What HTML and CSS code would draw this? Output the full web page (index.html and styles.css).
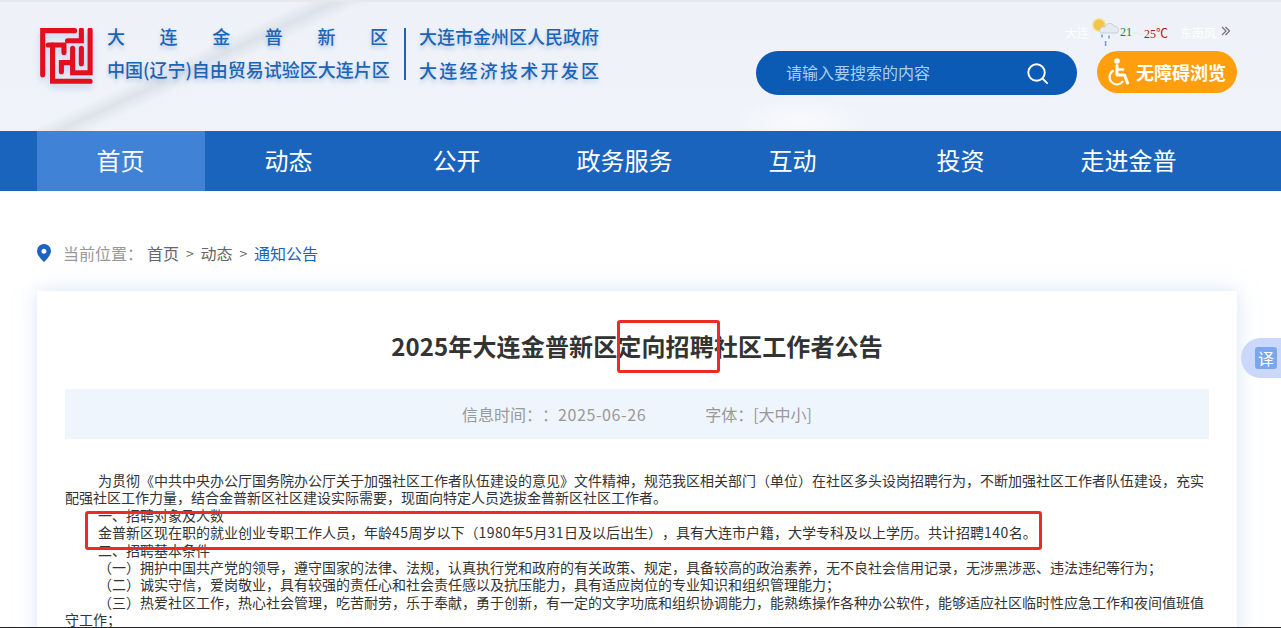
FILE: index.html
```html
<!DOCTYPE html>
<html lang="zh-CN">
<head>
<meta charset="utf-8">
<title>2025年大连金普新区定向招聘社区工作者公告</title>
<link rel="stylesheet" href="styles.css">
</head>
<body>
<div class="page">
  <header class="header">
    <div class="brand">
      <svg class="logo" viewBox="0 0 52 55" aria-hidden="true">
        <g fill="none" stroke="#e2101f" stroke-width="5" stroke-linejoin="miter" stroke-linecap="round">
          <path d="M2.600 46V2.600H34"/>
          <path d="M40.600 2V12.500H27"/>
          <path d="M49.200 2V44H32V20"/>
          <path d="M8 16.700H23.500V24"/>
          <path d="M12.300 16.700V52.300H49.200"/>
          <path d="M32 34H21V43"/>
          <path d="M40.600 20V35"/>
        </g>
      </svg>
      <div class="names">
        <div class="name-top"><span>大</span><span>连</span><span>金</span><span>普</span><span>新</span><span>区</span></div>
        <div class="name-sub">中国(辽宁)自由贸易试验区大连片区</div>
      </div>
      <div class="divider"></div>
      <div class="names">
        <div class="name-gov">大连市金州区人民政府</div>
        <div class="name-gov wide">大连经济技术开发区</div>
      </div>
    </div>
    <div class="tools">
      <div class="weather">
        <span class="w-city">大连</span>
        <svg class="w-icon" viewBox="0 0 28 30" aria-hidden="true">
          <circle cx="7" cy="8" r="6.500" fill="#f2c64a" stroke="#f8e6ae" stroke-width="1.600"/>
          <path d="M9 16c-3-3 0-7 4-6 1-4 7-5 9-1 4 0 6 4 3 7z" fill="#e6ebf2" stroke="#b4c0cf" stroke-width=".7"/>
          <path d="M10 17.500v3M17 18.500v3M13.600 24v5" stroke="#6fa3c8" stroke-width="1.600"/>
        </svg>
        <span class="w-low">21</span><span class="w-sep">～</span><span class="w-high">25℃</span>
        <span class="w-wind">东南风</span>
        <svg class="w-more" viewBox="0 0 9 10" aria-hidden="true">
          <path d="M1 1l4 4-4 4M4.500 1l4 4-4 4" fill="none" stroke="#777" stroke-width="1.300"/>
        </svg>
      </div>
      <div class="tool-row">
        <div class="search">
          <span class="search-text">请输入要搜索的内容</span>
          <svg class="search-icon" viewBox="0 0 24 24" aria-hidden="true">
            <circle cx="11" cy="11" r="8.600" fill="none" stroke="#fff" stroke-width="2"/>
            <path d="M17.500 17.500L22 22" stroke="#fff" stroke-width="2" stroke-linecap="round"/>
          </svg>
        </div>
        <div class="access">
          <svg class="access-icon" viewBox="0 0 24 28" aria-hidden="true">
            <circle cx="10" cy="3" r="2.800" fill="#fff"/>
            <path d="M10 7.500V17H17.500L20.500 25" fill="none" stroke="#fff" stroke-width="3" stroke-linecap="round" stroke-linejoin="round"/>
            <path d="M10 11.500H16" fill="none" stroke="#fff" stroke-width="2.400" stroke-linecap="round"/>
            <path d="M6.600 12.500A7.300 7.300 0 1 0 16 23" fill="none" stroke="#fff" stroke-width="2.200"/>
          </svg>
          <span>无障碍浏览</span>
        </div>
      </div>
    </div>
  </header>

  <nav class="nav">
    <a class="nav-item active">首页</a>
    <a class="nav-item">动态</a>
    <a class="nav-item">公开</a>
    <a class="nav-item">政务服务</a>
    <a class="nav-item">互动</a>
    <a class="nav-item">投资</a>
    <a class="nav-item">走进金普</a>
  </nav>

  <div class="crumbs">
    <svg class="pin" viewBox="0 0 14 18" aria-hidden="true">
      <path fill-rule="evenodd" d="M7 0a7 7 0 0 1 7 7c0 4.500-4.500 8.500-7 11C4.500 15.500 0 11.500 0 7a7 7 0 0 1 7-7zm0 4.700a2.500 2.500 0 1 0 0 5 2.500 2.500 0 0 0 0-5z" fill="#1a64bd"/>
    </svg>
    <span class="crumb-label">当前位置：</span>
    <span class="crumb-link">首页</span>
    <span class="crumb-sep">&gt;</span>
    <span class="crumb-link">动态</span>
    <span class="crumb-sep">&gt;</span>
    <span class="crumb-now">通知公告</span>
  </div>

  <main class="card">
    <h1 class="title">2025年大连金普新区定向招聘社区工作者公告</h1>
    <div class="info">
      <span>信息时间：：<span class="date">2025-06-26</span></span>
      <span>字体：[大中小]</span>
    </div>
    <article class="body">
      <p>为贯彻《中共中央办公厅国务院办公厅关于加强社区工作者队伍建设的意见》文件精神，规范我区相关部门（单位）在社区多头设岗招聘行为，不断加强社区工作者队伍建设，充实配强社区工作力量，结合金普新区社区建设实际需要，现面向特定人员选拔金普新区社区工作者。</p>
      <p>一、招聘对象及人数</p>
      <p>金普新区现在职的就业创业专职工作人员，年龄<span class="num">45</span>周岁以下（<span class="num">1980</span>年<span class="num">5</span>月<span class="num">31</span>日及以后出生），具有大连市户籍，大学专科及以上学历。共计招聘<span class="num">140</span>名。</p>
      <p>二、招聘基本条件</p>
      <p>（一）拥护中国共产党的领导，遵守国家的法律、法规，认真执行党和政府的有关政策、规定，具备较高的政治素养，无不良社会信用记录，无涉黑涉恶、违法违纪等行为；</p>
      <p>（二）诚实守信，爱岗敬业，具有较强的责任心和社会责任感以及抗压能力，具有适应岗位的专业知识和组织管理能力；</p>
      <p>（三）热爱社区工作，热心社会管理，吃苦耐劳，乐于奉献，勇于创新，有一定的文字功底和组织协调能力，能熟练操作各种办公软件，能够适应社区临时性应急工作和夜间值班值守工作；</p>
    </article>
  </main>

  <div class="mark mark-title"></div>
  <div class="mark mark-body"></div>
  <div class="translate"><span>译</span></div>
  <div class="edge"></div>
</div>
</body>
</html>
```

FILE: styles.css
```css
* { box-sizing: border-box; }
html, body { margin: 0; padding: 0; background: #fff; }
body { font-family: "Noto Sans CJK SC", "Noto Sans", sans-serif; color: #333; text-spacing-trim: space-all; }
.page { position: relative; width: 1281px; height: 628px; overflow: hidden; }

.header {
  height: 131px;
  padding: 26px 44px 0 40px;
  display: flex;
  justify-content: space-between;
  border-top: 2px solid #e6e8ec;
  background:
    radial-gradient(ellipse 70px 22px at 800px 118px, rgba(255,255,255,.55), transparent),
    linear-gradient(155deg, transparent 19.500%, rgba(200,206,216,.45) 21.500%, rgba(236,240,246,.2) 23.500%, transparent 25%),
    linear-gradient(180deg, #eef1f7, #f0f4fa);
}
.brand { display: flex; align-items: flex-start; color: #1c64b4; }
.logo { width: 53px; height: 56px; flex: none; margin-right: 14px; filter: drop-shadow(0 4px 3px rgba(90,140,220,.3)); }
.names { display: flex; flex-direction: column; text-shadow: 0 3px 4px rgba(80,130,210,.35); }
.name-top { width: 284px; height: 22px; display: flex; justify-content: space-between; font-size: 18px; line-height: 22px; font-weight: 500; margin-top: -3px; padding-right: 3px; }
.name-sub { font-size: 18px; line-height: 22px; white-space: nowrap; margin-top: 11px; font-weight: 500; margin-right: -4px; }
.divider { width: 2px; height: 52px; background: #1c64b4; margin: 0 13px; }
.name-gov { font-size: 18px; line-height: 22px; font-weight: 500; margin-top: -3px; white-space: nowrap; }
.name-gov.wide { letter-spacing: 2.250px; margin-top: 12px; }

.tools { width: 481px; display: flex; flex-direction: column; align-items: flex-end; margin-top: -7px; }
.weather { height: 23px; width: 100%; display: flex; align-items: center; justify-content: flex-end; font-size: 12px; color: #fff; padding-right: 7px; }
.w-city { margin-right: 3px; }
.w-icon { width: 28px; height: 30px; flex: none; margin-top: -2px; }
.w-low { font-family: "Liberation Serif", serif; color: #0a8a3c; font-size: 12px; }
.w-sep { color: #e3e8ef; width: 12px; text-align: center; font-size: 11px; }
.w-high { font-family: "Liberation Serif", serif; color: #b3121f; font-size: 12px; }
.w-wind { margin-left: 12px; }
.w-more { width: 9px; height: 10px; flex: none; margin-left: 5px; margin-top: -3px; }
.tool-row { display: flex; align-items: flex-start; gap: 20px; margin-top: 7px; }
.search { width: 321px; height: 44px; border-radius: 22px; background: #0b5ab4; display: flex; align-items: center; justify-content: space-between; padding: 0 28px 0 30px; }
.search-text { font-size: 16px; color: #a8d0f6; position: relative; top: -1px; }
.search-icon { width: 23px; height: 23px; flex: none; }
.access { width: 140px; height: 42px; border-radius: 21px; background: #ff9f0e; display: flex; align-items: center; padding-left: 10px; color: #fff; font-size: 18px; font-weight: 700; white-space: nowrap; }
.access-icon { width: 24px; height: 28px; flex: none; margin-right: 5px; }

.nav { height: 60px; background: #1a64bd; display: flex; padding-left: 37px; }
.nav-item { width: 168px; display: flex; align-items: center; justify-content: center; font-size: 24px; color: #fff; padding: 0 1px 3px 0; }
.nav-item.active { background: #4083d6; }

.crumbs { height: 100px; padding: 24px 0 0 37px; display: flex; align-items: center; font-size: 16px; }
.pin { width: 14px; height: 18px; flex: none; margin-right: 12px; }
.crumb-label { color: #999; width: 84px; }
.crumb-link { color: #666; }
.crumb-sep { color: #666; width: 21.500px; text-align: center; font-size: 14px; }
.crumb-now { color: #1a64bd; }

.card { margin: 0 44px 0 37px; height: 500px; padding: 0 28px; background: #fff; box-shadow: 0 0 18px rgba(180,205,240,.5); }
.title { margin: 0; padding-top: 37px; height: 98px; font-size: 24px; line-height: 36px; font-weight: 700; color: #333; text-align: center; letter-spacing: .14px; }
.info { height: 50px; background: #eff5fc; display: flex; justify-content: center; align-items: center; gap: 59px; font-size: 16px; color: #999; }
.date { letter-spacing: .6px; }
.body { padding-top: 33px; font-size: 14px; line-height: 17.400px; color: #333; padding-right: 4px; }
.body p { margin: 0; text-indent: 33px; }
.num { letter-spacing: .45px; }

.mark { position: absolute; border: 3px solid #ee2a24; border-radius: 3px; }
.mark-title { left: 617px; top: 320px; width: 103px; height: 53px; }
.mark-body { left: 85px; top: 511px; width: 957px; height: 39px; }

.translate { position: absolute; left: 1241px; top: 338px; width: 40px; height: 40px; border-radius: 20px 0 0 20px; background: #cbd8fb; padding: 9px 0 0 14px; }
.translate span { display: block; width: 22px; height: 22px; border-radius: 3px; background: #78a7ef; color: #fff; font-size: 16px; line-height: 22px; text-align: center; }
.edge { position: absolute; left: 0; right: 0; bottom: 0; height: 1px; background: #222; }
```
